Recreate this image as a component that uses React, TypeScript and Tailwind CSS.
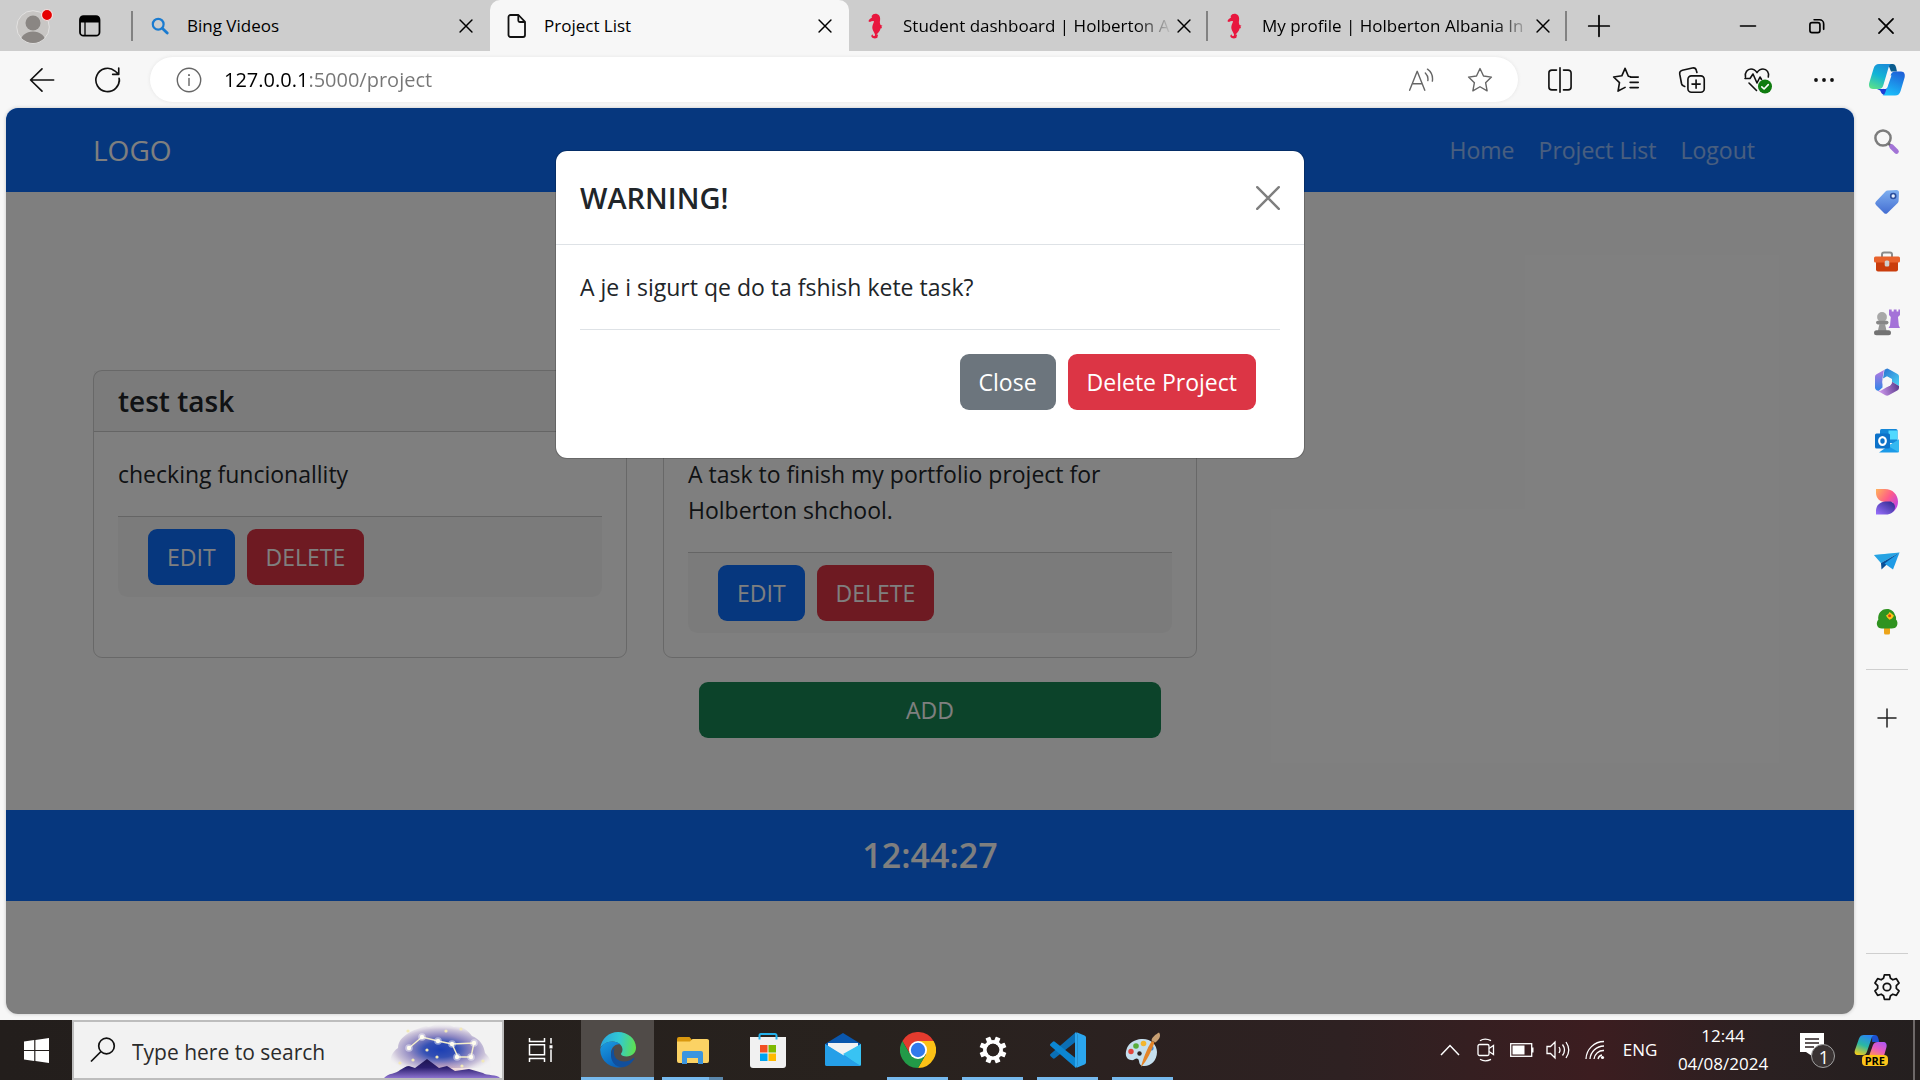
import type { ReactNode } from "react";

const UI = "font-['Open_Sans','Noto_Sans',sans-serif]";

/* ---------- browser chrome icons ---------- */

const Line = ({ size = 24, children, w = 1.5, className = "" }: { size?: number; children: ReactNode; w?: number; className?: string }) => (
  <svg width={size} height={size} viewBox="0 0 24 24" fill="none" stroke="currentColor" strokeWidth={w} strokeLinecap="round" strokeLinejoin="round" className={`block shrink-0 ${className}`} aria-hidden="true">
    {children}
  </svg>
);

const Cross = ({ size = 24, w = 1.6 }: { size?: number; w?: number }) => (
  <Line size={size} w={w}>
    <path d="M5.5 5.5l13 13M18.5 5.5l-13 13" />
  </Line>
);

const Avatar = () => (
  <svg width="40" height="40" viewBox="0 0 40 40" className="block" aria-hidden="true">
    <defs>
      <clipPath id="avatarClip">
        <circle cx="19" cy="21" r="16" />
      </clipPath>
    </defs>
    <circle cx="19" cy="21" r="16.3" fill="#c8c6c4" stroke="#e3e2e1" strokeWidth="1" />
    <g clipPath="url(#avatarClip)" fill="#8a8683">
      <circle cx="19" cy="17" r="7.5" />
      <ellipse cx="19" cy="36" rx="12.5" ry="10.5" />
    </g>
    <circle cx="33" cy="9" r="5.5" fill="#e60000" stroke="#f1e2e2" strokeWidth="1.2" />
  </svg>
);

const Seahorse = () => (
  <svg width="16" height="26" viewBox="0 0 16 26" className="block shrink-0" aria-hidden="true">
    <path d="M5.2 1.2C7 .2 9.8.6 11.2 2.4c1.3 1.8 1 4.2.7 6.2-.2 1.2.2 2.4.7 3.5l1.9.6-1.2 1 .8 1.4-1.6.3c-.3 2-1.7 3.6-3 5.1-1 1.1-1.2 1.8-.5 2.4.8.6.7 1.7-.2 2.2-1.400.8-4.400.5-5.300-1.300-.5-1.200.3-2.300 1.300-2.200-.200 1.100.6 1.800 1.500 1.600.9-.3.9-1.300.5-2.300-.8-1.900-2-3.300-2.400-5.400-.4-2.300.4-4.200 1.300-6.100.3-.7.3-1.300-.1-1.500-1.300-.1-2.500.3-3.700 1.200L.4 8.200C1 6.300 2.600 5.500 4 4.500L3.600 2.900z" fill="#e8173e" />
    <path d="M6 23.500c1.400 1 3 .2 3.200-1.300" stroke="#e8173e" strokeWidth="1.600" fill="none" strokeLinecap="round" />
  </svg>
);

const FilePage = () => (
  <svg width="20" height="26" viewBox="0 0 20 26" fill="none" stroke="#111" strokeWidth="1.800" strokeLinejoin="round" className="block shrink-0" aria-hidden="true">
    <path d="M3.500 2h8l6.500 6.800V22a2 2 0 0 1-2 2H3.500a2 2 0 0 1-2-2V4a2 2 0 0 1 2-2z" />
    <path d="M11.300 2.200v5.300a1.500 1.500 0 0 0 1.500 1.500h5" />
  </svg>
);

const BingSearch = () => (
  <svg width="18" height="18" viewBox="0 0 18 18" fill="none" stroke="#1a7bd0" className="block shrink-0" aria-hidden="true">
    <circle cx="7.200" cy="7.200" r="5.400" strokeWidth="2.200" />
    <path d="M11.500 11.500l4.700 4.500" strokeWidth="2.800" strokeLinecap="round" />
  </svg>
);

const Copilot = ({ size = 38 }: { size?: number }) => (
  <svg width={size} height={size} viewBox="0 0 38 38" className="block shrink-0" aria-hidden="true">
    <defs>
      <linearGradient id="cpA" x1="0.600" y1="0" x2="0.200" y2="1">
        <stop offset="0" stopColor="#1a8fd8" />
        <stop offset="0.450" stopColor="#12b4d6" />
        <stop offset="1" stopColor="#5be08a" />
      </linearGradient>
      <linearGradient id="cpB" x1="0.700" y1="0" x2="0.300" y2="1">
        <stop offset="0" stopColor="#1e62d8" />
        <stop offset="1" stopColor="#1bc0fb" />
      </linearGradient>
    </defs>
    <path d="M20 3h4.500c2.300 0 3 1.500 3.500 3.200l1 4.300h-6z" fill="#0b5c8e" />
    <path d="M11 3h13c-2 0-3 2-3.600 4l-5 17c-.7 2.500-2 4-4.800 4H5c-3.500 0-4.500-3-3.800-6L5.600 7.500C6.500 4.500 8 3 11 3z" fill="url(#cpA)" />
    <path d="M9 28h6l4-1 2 7h-4c-3 0-4-2.500-4.800-4.500z" fill="#1d3fd6" />
    <path d="M27.500 10.500H33c3.500 0 4.300 3 3.600 6l-4 13.500c-1 3-2.500 4.500-5.500 4.500H14c2 0 3-2 3.600-4l5-16c.7-2.500 2-4 4.900-4z" fill="url(#cpB)" />
    <path d="M21.500 14.500h2l-4 11.500c-.5 1.500-1.500 2-3 2h-1z" fill="#f7f7f7" />
  </svg>
);

/* ---------- tabs ---------- */

type Tab = { title: string; icon: ReactNode; active?: boolean; rule?: boolean };

const tabs: Tab[] = [
  { title: "Bing Videos", icon: <BingSearch /> },
  { title: "Project List", icon: <FilePage />, active: true },
  { title: "Student dashboard | Holberton A", icon: <Seahorse />, rule: true },
  { title: "My profile | Holberton Albania In", icon: <Seahorse />, rule: true },
];

const TabStrip = () => (
  <header className="flex h-[51px] items-stretch bg-[#cdcdcd] text-black">
    <div className="flex w-[131px] shrink-0 items-center gap-8 pl-[14px]">
      <button type="button" aria-label="Profile"><Avatar /></button>
      <button type="button" aria-label="Tab actions" className="-ml-4">
        <svg width="40" height="22" viewBox="0 0 40 22" className="block" aria-hidden="true">
          <rect x="10" y="1.200" width="19.500" height="19.500" rx="3.500" fill="none" stroke="#000" strokeWidth="1.800" />
          <path d="M10 7.500V4a3 3 0 0 1 3-3h13.500a3 3 0 0 1 3 3v3.500z" fill="#000" />
          <path d="M15 7v13" stroke="#000" strokeWidth="1.300" />
        </svg>
      </button>
    </div>
    <nav className="flex min-w-0 max-w-[1436px] flex-1" aria-label="Tabs">
      {tabs.map((t, i) => (
        <div
          key={t.title}
          className={`flex min-w-0 flex-1 items-center ${t.active ? "rounded-t-[10px] bg-[#f7f7f7]" : ""}`}
        >
          {i === 0 && <span className="h-[30px] w-0.5 shrink-0 bg-[#828282]" />}
          <span className="flex w-[54px] shrink-0 items-center justify-center">{t.icon}</span>
          <span className={`min-w-0 flex-1 overflow-hidden text-[17px] leading-6 whitespace-nowrap ${t.rule ? "[mask-image:linear-gradient(to_right,#000_calc(100%-36px),transparent)]" : ""}`}>
            {t.title}
          </span>
          <button type="button" aria-label={`Close ${t.title}`} className="flex w-6 shrink-0 justify-center">
            <Cross size={22} />
          </button>
          <span className={`ml-[10px] h-[30px] w-0.5 shrink-0 ${t.rule ? "bg-[#828282]" : ""}`} />
        </div>
      ))}
    </nav>
    <button type="button" aria-label="New tab" className="flex w-16 items-center justify-center">
      <Line size={26} w={1.600}><path d="M12 2.500v19M2.500 12h19" /></Line>
    </button>
    <div className="ml-auto flex">
      <button type="button" aria-label="Minimize" className="flex w-[69px] items-center justify-center">
        <Line size={20} w={2}><path d="M3 12h18" /></Line>
      </button>
      <button type="button" aria-label="Restore" className="flex w-[69px] items-center justify-center">
        <Line size={20} w={2}>
          <rect x="3.500" y="8" width="12" height="12" rx="2.500" />
          <path d="M8.500 4.500h6.500a5 5 0 0 1 5 5V16" />
        </Line>
      </button>
      <button type="button" aria-label="Close window" className="flex w-[69px] items-center justify-center">
        <Cross size={26} w={1.600} />
      </button>
    </div>
  </header>
);

/* ---------- toolbar ---------- */

const STAR = "M12 2.200l3 6.400 6.800.9-5 4.800 1.300 7-6.100-3.500-6.100 3.500 1.300-7-5-4.800 6.800-.9z";

const Toolbar = () => (
  <div className="flex h-[57px] items-center bg-[#f7f7f7] text-[#111]">
    <div className="flex w-[150px] shrink-0 items-center pl-[9px]">
      <button type="button" aria-label="Back" className="flex w-[66px] justify-center">
        <Line size={28} w={1.400}><path d="M22 12H2.200M12 2.500L2.200 12l9.800 9.500" /></Line>
      </button>
      <button type="button" aria-label="Refresh" className="flex w-[66px] justify-center">
        <Line size={28} w={1.400}><path d="M21.500 10.500A10 10 0 1 1 18 4.300l3 2.700M21.200 1.800V7.200H16M21.500 10.500q.4 1.500.2 3" /></Line>
      </button>
    </div>
    <div className="flex h-[45px] min-w-0 flex-1 items-center rounded-full bg-white pr-6 pl-[26px] text-[#666] shadow-[0_0_3px_1px_#ececec]">
      <Line size={26} w={1.300}><circle cx="12" cy="12" r="10.800" /><path d="M12 10.500v6.500" /><path d="M12 7.300v.2" strokeWidth="1.800" /></Line>
      <input
        type="text"
        aria-label="Address"
        defaultValue="127.0.0.1:5000/project"
        className="ml-[22px] block min-w-0 flex-1 bg-[linear-gradient(to_right,#000_84px,#767676_84px)] bg-clip-text text-[20px] leading-7 text-transparent outline-none"
      />
      <button type="button" aria-label="Read aloud" className="mr-8">
        <Line size={26} w={1.300}><path d="M1.500 21.500L8.500 4l7 17.500M4 15.500h9M16 5.500q3 3 2.300 7M18 2q5.500 4 4.500 11" /></Line>
      </button>
      <button type="button" aria-label="Add to favorites">
        <Line size={28} w={1.200}><path d={STAR} /></Line>
      </button>
    </div>
    <div className="flex w-[402px] shrink-0 items-center pl-[9px]">
      <button type="button" aria-label="Split screen" className="flex w-[66px] justify-center">
        <Line size={28} w={1.400}><path d="M9 3.500H5a2.500 2.500 0 0 0-2.500 2.500v12A2.500 2.500 0 0 0 5 20.500h4M15 3.500h4A2.500 2.500 0 0 1 21.500 6v12a2.500 2.500 0 0 1-2.500 2.500h-4M12 1.500v21" /></Line>
      </button>
      <button type="button" aria-label="Favorites" className="flex w-[66px] justify-center">
        <Line size={28} w={1.400}><path d="M16 9.200L14 8.800 11.200 2 8.400 8.400l-7 1 5 4.900-1.200 7.200 6-3.200M15.500 9.500h7M15.500 14h7M15.500 18.500h7" /></Line>
      </button>
      <button type="button" aria-label="Collections" className="flex w-[66px] justify-center">
        <Line size={28} w={1.400}><rect x="8.500" y="8.500" width="14" height="14" rx="3" /><path d="M15.500 12v7M12 15.500h7M5.800 17.500L4.500 17a3 3 0 0 1-1.500-2L1.500 7a3 3 0 0 1 2.300-3.400l8.500-1.900A3 3 0 0 1 15.800 4l.4 1.500" /></Line>
      </button>
      <button type="button" aria-label="Browser essentials" className="flex w-[66px] justify-center">
        <svg width="30" height="30" viewBox="0 0 30 30" fill="none" stroke="#111" strokeWidth="1.600" strokeLinecap="round" strokeLinejoin="round" className="block" aria-hidden="true">
          <path d="M2.500 12C1.500 7.500 4.500 4 8 4c3 0 4.800 1.800 6 3.600C15.200 5.800 17 4 20 4c3.800 0 6.500 3.800 5.300 8M2 13.500h5l3-4.500 4 9 3-6 1.500 2.500M6 18l7.500 7.500" />
          <circle cx="22" cy="21.500" r="7" fill="#107c10" stroke="none" />
          <path d="M18.800 21.800l2.300 2.200 4.200-4.400" stroke="#fff" />
        </svg>
      </button>
      <button type="button" aria-label="Settings and more" className="flex w-[66px] justify-center">
        <svg width="24" height="6" viewBox="0 0 24 6" className="block" fill="#111" aria-hidden="true"><circle cx="4" cy="3" r="1.900" /><circle cx="12" cy="3" r="1.900" /><circle cx="20" cy="3" r="1.900" /></svg>
      </button>
      <button type="button" aria-label="Copilot" className="ml-[2px] flex w-[56px] justify-center"><Copilot size={38} /></button>
    </div>
  </div>
);

/* ---------- edge sidebar ---------- */

const Art = ({ children }: { children: ReactNode }) => (
  <svg width="28" height="28" viewBox="0 0 28 28" className="block" aria-hidden="true">{children}</svg>
);

const sideItems: { name: string; icon: ReactNode }[] = [
  {
    name: "Search",
    icon: (
      <Art>
        <circle cx="10" cy="10" r="7.600" fill="none" stroke="#7c7c7c" strokeWidth="2.500" />
        <path d="M15.500 15.500l2.500 2.500" stroke="#6b6b6b" strokeWidth="2.500" />
        <path d="M18.500 18.500l5 5" stroke="#a274d6" strokeWidth="4.600" strokeLinecap="round" />
      </Art>
    ),
  },
  {
    name: "Shopping",
    icon: (
      <Art>
        <defs><linearGradient id="tagG" x1="0.500" y1="0" x2="0.500" y2="1"><stop offset="0" stopColor="#7fb0f0" /><stop offset="1" stopColor="#446ed2" /></linearGradient></defs>
        <path d="M14.500 2.500L23.500 2a2.500 2.500 0 0 1 2.500 2.500l-.4 8.500a3 3 0 0 1-.9 2L14.500 25a2.500 2.500 0 0 1-3.500 0l-8-8a2.500 2.500 0 0 1 0-3.500L12.500 3.400a3 3 0 0 1 2-.9z" fill="url(#tagG)" />
        <circle cx="20.200" cy="8" r="2.500" fill="#e8f1ff" stroke="#2c4f9e" strokeWidth="1.600" />
      </Art>
    ),
  },
  {
    name: "Tools",
    icon: (
      <Art>
        <path d="M9 9V6.500a2 2 0 0 1 2-2h6a2 2 0 0 1 2 2V9" fill="none" stroke="#8b8b8b" strokeWidth="2" />
        <path d="M3 12h22v9.500a2 2 0 0 1-2 2H5a2 2 0 0 1-2-2z" fill="#ca3d0c" />
        <rect x="1" y="8.500" width="26" height="6" rx="1.500" fill="#e8622c" />
        <rect x="11.700" y="12.500" width="4.600" height="6" rx="1.500" fill="#cfcfcf" />
      </Art>
    ),
  },
  {
    name: "Games",
    icon: (
      <Art>
        <path d="M16 1.500h2.700v2h2v-2h2.900v2h1.800v-2H27v5.500l-2 2 .8 8.500L27 20H15.500l1.500-2.500.8-8.500-1.800-2z" fill="#a472d8" />
        <circle cx="9" cy="9" r="4.900" fill="#a8a8a8" />
        <rect x="3" y="12.800" width="12.500" height="3.600" rx="1.800" fill="#868686" />
        <path d="M6.500 16h5.500l1.600 7H4.800z" fill="#979797" />
        <rect x="1" y="22.200" width="17" height="5" rx="2.500" fill="#737373" />
      </Art>
    ),
  },
  {
    name: "Microsoft 365",
    icon: (
      <Art>
        <defs>
          <linearGradient id="mA" x1="0" y1="0" x2="1" y2="1"><stop offset="0" stopColor="#2a6fd0" /><stop offset="1" stopColor="#4bd5f5" /></linearGradient>
          <linearGradient id="mB" x1="0" y1="0" x2="0" y2="1"><stop offset="0" stopColor="#b878e0" /><stop offset="1" stopColor="#2d86e8" /></linearGradient>
          <linearGradient id="mC" x1="0" y1="0.500" x2="1" y2="0.300"><stop offset="0" stopColor="#d29bf0" /><stop offset="1" stopColor="#5b3a8c" /></linearGradient>
        </defs>
        <path d="M11.500 1.800l2-1q1-.4 2 .1l9 5.100q1.500.9 1.500 2.500V18l-7-4.200V11l-5-2.800-4 2.300z" fill="url(#mA)" />
        <path d="M11 2L3.500 6.200Q2 7 2 8.800v11q0 1.500 1.500 2.400L5.500 23l4-3.500v-9z" fill="url(#mB)" />
        <path d="M19 13.800l7 4.200v2q0 1.500-1.300 2.200l-9 5.100q-1.700.9-3.300 0L4.500 22.700q2.500.5 4.500-.8l8.500-4.900q1.500-1 1.500-3.200z" fill="url(#mC)" />
        <circle cx="14" cy="14" r="4.600" fill="#f7f7f7" />
      </Art>
    ),
  },
  {
    name: "Outlook",
    icon: (
      <Art>
        <path d="M7 2.500A1.500 1.500 0 0 1 8.500 1H23a1.500 1.500 0 0 1 1.500 1.500V15H7z" fill="#1587d8" />
        <path d="M15.500 2.500H24.500v9h-9z" fill="#50d9ff" />
        <path d="M7 11.500h10v7H7z" fill="#0a5ea8" />
        <path d="M26 11.500V23a1.500 1.500 0 0 1-1.500 1.500H6L15 18z" fill="#1c9ae8" />
        <path d="M26 11.500v12.800L15 18z" fill="#35b8f1" />
        <rect x="2" y="5.500" width="15" height="15" rx="1.500" fill="#0d72c9" />
        <ellipse cx="9.500" cy="13" rx="3.300" ry="3.900" fill="none" stroke="#fff" strokeWidth="2.200" />
      </Art>
    ),
  },
  {
    name: "Designer",
    icon: (
      <Art>
        <defs>
          <linearGradient id="dA" x1="0" y1="0" x2="1" y2="0.800"><stop offset="0" stopColor="#ffb45a" /><stop offset="0.500" stopColor="#ff5c87" /><stop offset="1" stopColor="#b53df5" /></linearGradient>
          <linearGradient id="dB" x1="0" y1="1" x2="1" y2="0"><stop offset="0" stopColor="#9a70ff" /><stop offset="1" stopColor="#2b2789" /></linearGradient>
        </defs>
        <path d="M3 1h9c7.500 0 13 5.500 13 12.700 0 6.300-4.500 12.300-13 12.300l8-12H12c-5 0-9-4-9-9z" fill="url(#dA)" />
        <path d="M3 26.500V23c0-5.500 4-9.500 9.500-9.500h4c3 0 5.500 2.500 5.500 5.500 0 4.500-4 7.500-9 7.500z" fill="url(#dB)" />
      </Art>
    ),
  },
  {
    name: "Drop",
    icon: (
      <Art>
        <path d="M1 7l25.500-2.500L8 15z" fill="#35c1f1" />
        <path d="M8 15l18.500-10.500L8.500 21.500z" fill="#0a4f96" />
        <path d="M11.500 15.500L26.500 4.500 20 21.500z" fill="#1f9be6" />
        <path d="M1 7l7 8L26 4.700z" fill="#1a86d6" opacity="0.500" />
      </Art>
    ),
  },
  {
    name: "Tree",
    icon: (
      <Art>
        <rect x="11" y="19" width="6" height="7.500" rx="1.500" fill="#eca41a" />
        <path d="M14 1c4 0 7 2.500 8 6 1 1 1.300 3 1 4.500 1.500 1.500 2 4.500.8 6.500-1 1.800-3 2.500-5 2.500H9c-2.500 0-4.500-1-5-3.500-.5-2 .2-4 1.300-5.200C4.500 6 8 1 14 1z" fill="#2f9320" />
        <path d="M16.500 4l2 1.500 2.500 2.300-2 2.700-2.500 1.300-2.300-2.300L13 7.500l2.300-1.500z" fill="#ffc21a" />
        <circle cx="16.600" cy="7.800" r="1.500" fill="#d6480f" />
      </Art>
    ),
  },
];

const GEAR = "M9.800 1.500h4.400l.8 3.100 2 1.200 3-1 2.300 3.800-2.300 2.200v2.400l2.300 2.200-2.300 3.800-3-1-2 1.200-.8 3.100H9.800L9 19.400l-2-1.200-3 1-2.300-3.800L4 13.200v-2.400L1.700 8.600 4 4.800l3 1 2-1.200z";

const Sidebar = () => (
  <aside className="flex w-[66px] shrink-0 flex-col items-center pb-[13px]" aria-label="Sidebar">
    <div className="flex flex-col gap-8 pt-5">
      {sideItems.map((s) => (
        <button type="button" key={s.name} aria-label={s.name} title={s.name}>{s.icon}</button>
      ))}
    </div>
    <hr className="mt-[33px] w-[42px] border-[#cfcfcf]" />
    <button type="button" aria-label="Customize" className="mt-9 text-[#222]"><Line size={24} w={1.500}><path d="M12 3v18M3 12h18" /></Line></button>
    <hr className="mt-auto w-[42px] border-[#cfcfcf]" />
    <button type="button" aria-label="Sidebar settings" className="mt-[19px] text-[#111]"><Line size={28} w={1.500}><path d={GEAR} /><circle cx="12" cy="12" r="3.200" /></Line></button>
  </aside>
);

/* ---------- web page ---------- */

const BTN = "rounded-[9px] px-[18px] py-[9px] text-[23px] leading-9 text-white border border-transparent";

const ProjectCard = ({ title, text }: { title: string; text: string }) => (
  <article className="mx-[18px] flex flex-col rounded-[9px] border border-black/[0.18]">
    <h2 className="border-b border-black/[0.18] bg-black/[0.03] px-6 py-3 text-[28px] leading-9 font-semibold">{title}</h2>
    <div className="p-6">
      <p className="mb-6">{text}</p>
      <div className="flex gap-3 rounded-b-[9px] border-t border-black/[0.18] bg-black/[0.03] px-[30px] py-3">
        <button type="button" className={`${BTN} bg-[#0d6efd]`}>EDIT</button>
        <button type="button" className={`${BTN} bg-[#dc3545]`}>DELETE</button>
      </div>
    </div>
  </article>
);

const DeleteDialog = () => (
  <div className="absolute inset-0 flex items-start justify-center bg-black/50 pt-[42px]">
    <section role="dialog" aria-modal="true" aria-labelledby="dlg-title" className="w-full max-w-[750px] rounded-xl border border-black/[0.18] bg-white bg-clip-padding pb-6">
      <header className="flex items-center justify-between border-b border-[#dee2e6] p-6">
        <h2 id="dlg-title" className="text-[29px] leading-[45px] font-semibold">WARNING!</h2>
        <button type="button" aria-label="Close dialog" className="text-[#7f7f7f]">
          <Line size={24} w={2.400}><path d="M1.200 1.200l21.600 21.600M22.800 1.200L1.200 22.800" /></Line>
        </button>
      </header>
      <div className="px-6 pt-6">
        <p className="leading-9">A je i sigurt qe do ta fshish kete task?</p>
        <div className="mt-6 flex justify-end gap-3 border-t border-[#dee2e6] p-6">
          <button type="button" className={`${BTN} bg-[#6c757d]`}>Close</button>
          <button type="button" className={`${BTN} bg-[#dc3545]`}>Delete Project</button>
        </div>
      </div>
    </section>
  </div>
);

const WebPage = () => (
  <main className="relative min-w-0 flex-1 overflow-hidden rounded-xl bg-white text-[23px] leading-9 text-[#212529] shadow-[0_0_3px_1px_#d8d8d8]">
    <nav className="bg-[#0d6efd]">
      <div className="mx-auto flex max-w-[1710px] items-center justify-between px-[18px] py-5">
        <a href="#home" className="text-[28px] leading-[44px] text-white">LOGO</a>
        <ul className="flex gap-6 px-3 text-white/55">
          <li><a href="#home">Home</a></li>
          <li><a href="#projects">Project List</a></li>
          <li><a href="#logout">Logout</a></li>
        </ul>
      </div>
    </nav>
    <div className="mx-auto grid max-w-[1710px] grid-cols-3 gap-y-6 pt-[178px] pb-[72px]">
      <ProjectCard title="test task" text="checking funcionallity" />
      <ProjectCard title="Portfolio" text="A task to finish my portfolio project for Holberton shchool." />
      <button type="button" className={`${BTN} col-start-2 mx-[54px] bg-[#198754]`}>ADD</button>
    </div>
    <footer className="bg-[#0d6efd] py-6 text-center">
      <p className="text-[34px] leading-[43px] font-semibold text-white">12:44:27</p>
    </footer>
    <DeleteDialog />
  </main>
);

/* ---------- windows taskbar ---------- */

const SearchArt = () => (
  <svg width="118" height="56" viewBox="0 0 118 56" className="block self-end" aria-hidden="true">
    <defs>
      <radialGradient id="sky" cx="0.500" cy="0.600" r="0.560">
        <stop offset="0" stopColor="#1c3fb4" />
        <stop offset="0.300" stopColor="#3450b4" />
        <stop offset="0.550" stopColor="#8f88c2" />
        <stop offset="0.800" stopColor="#cdc5da" />
        <stop offset="1" stopColor="#f0edf2" stopOpacity="0.200" />
      </radialGradient>
      <radialGradient id="dawn" cx="0.500" cy="1" r="0.600">
        <stop offset="0" stopColor="#e88f90" />
        <stop offset="1" stopColor="#e88f90" stopOpacity="0" />
      </radialGradient>
      <linearGradient id="hill" x1="0" y1="0" x2="0" y2="1">
        <stop offset="0" stopColor="#1d1450" />
        <stop offset="0.450" stopColor="#2b1f6e" />
        <stop offset="1" stopColor="#8d73cf" />
      </linearGradient>
    </defs>
    <path d="M7 46C5 36 8 30 14 26c0-8 6-12 12-16 6-3 10-4 16-6 4 2 8-1 12-4 8 0 12 3 16 5 8-2 14 4 18 9 8 3 12 10 13 17 6 5 6 10 6 15z" fill="url(#sky)" />
    <ellipse cx="60" cy="44" rx="38" ry="22" fill="url(#dawn)" />
    <path d="M25 26L38 15l16 4 14 3 22-1-3 14-13 0-6-13" fill="none" stroke="#f5efc9" strokeWidth="1.400" />
    {[[25, 26], [38, 15], [54, 19], [68, 22], [90, 21], [87, 35], [73, 35]].map(([x, y]) => (
      <g key={`${x}-${y}`}>
        <circle cx={x} cy={y} r="3.800" fill="#fff" opacity="0.450" />
        <circle cx={x} cy={y} r="2.200" fill="#fffdf0" />
      </g>
    ))}
    {[[24, 9], [16, 41], [29, 38], [62, 9], [77, 7], [43, 28], [53, 35], [99, 39], [78, 44]].map(([x, y]) => (
      <circle key={`${x}-${y}`} cx={x} cy={y} r="1.600" fill="#f2e9b8" />
    ))}
    <path d="M0 56c4-5 12-4 16-8 4-2 6-4 9-4l6 2 12-9 12 9 8-2 8 5 14-2 14 4c4 3 14 1 17 5z" fill="url(#hill)" />
  </svg>
);

const WindowsLogo = () => (
  <svg width="25" height="25" viewBox="0 0 25 25" fill="#fff" className="block" aria-hidden="true">
    <path d="M0 3.500l10.200-1.400v9.800H0zM11.400 1.900L25 0v11.900H11.400zM0 13h10.200v9.900L0 21.500zM11.400 13H25v12l-13.600-1.900z" />
  </svg>
);

const App36 = ({ children }: { children: ReactNode }) => (
  <svg width="36" height="36" viewBox="0 0 36 36" className="block" aria-hidden="true">{children}</svg>
);

const taskApps: { name: string; state: "active" | "open" | "multi" | "idle"; icon: ReactNode }[] = [
  {
    name: "Microsoft Edge",
    state: "active",
    icon: (
      <App36>
        <defs>
          <linearGradient id="eA" x1="0" y1="0.500" x2="1" y2="0.600"><stop offset="0" stopColor="#2aa5dd" /><stop offset="0.500" stopColor="#31c9d4" /><stop offset="1" stopColor="#60e24b" /></linearGradient>
          <linearGradient id="eB" x1="0" y1="0" x2="0.500" y2="1"><stop offset="0" stopColor="#1b9de2" /><stop offset="1" stopColor="#0a63bb" /></linearGradient>
        </defs>
        <path d="M18 0c10 0 18 7 18 15.500 0 5.500-4 9-9.500 9-3 0-5.500-1-5.500-2.500 0-1 1.500-1.500 1.500-4.500 0-4-4-8-10-8C6.500 9.500 2 13 .3 16 1.500 6.500 9 0 18 0z" fill="url(#eA)" />
        <path d="M.2 17C2 12 7 9.500 12.500 9.500c3 0 6 1 8 3-6-1-9.500 4-9.500 9 0 7 5.500 12.500 13 13A18 18 0 0 1 .2 17z" fill="url(#eB)" />
        <path d="M14 18.500c-1 7 4 11 10 11 4 0 7-1.500 9.500-3.500.7-.4 1 .2.700.8C32 31 28 34.500 23 35.300 15 35.500 10.500 29 11 22c.3-3 1.500-5 3.500-6z" fill="#114f9c" />
      </App36>
    ),
  },
  {
    name: "File Explorer",
    state: "multi",
    icon: (
      <App36>
        <path d="M2 7a2 2 0 0 1 2-2h10.500l2.500 3H34v5H2z" fill="#d9980f" />
        <path d="M2 9.500h13L17.500 7H32a2 2 0 0 1 2 2v20a2 2 0 0 1-2 2H4a2 2 0 0 1-2-2z" fill="#fbd264" />
        <path d="M7 21a2 2 0 0 1 2-2h17a2 2 0 0 1 2 2v11h-5v-6H12v6H7z" fill="#3b95df" />
      </App36>
    ),
  },
  {
    name: "Microsoft Store",
    state: "idle",
    icon: (
      <App36>
        <path d="M0 5h36v28a3 3 0 0 1-3 3H3a3 3 0 0 1-3-3z" fill="#f1f1f1" />
        <path d="M9.500 7.500V3.500a1.500 1.500 0 0 1 1.500-1.500h14a1.500 1.500 0 0 1 1.500 1.500v4" fill="none" stroke="#24b2ec" strokeWidth="2" />
        <path d="M10 13h7.500v7.500H10z" fill="#f25022" /><path d="M18.500 13H26v7.500h-7.500z" fill="#7fba00" />
        <path d="M10 21.500h7.500V29H10z" fill="#00a4ef" /><path d="M18.500 21.500H26V29h-7.500z" fill="#ffb900" />
      </App36>
    ),
  },
  {
    name: "Mail",
    state: "idle",
    icon: (
      <App36>
        <path d="M0 12L18 1l18 11v5H0z" fill="#0a57ad" />
        <path d="M3 11h30v10L18 29 3 21z" fill="#f2f2f2" />
        <path d="M0 12l18 12L36 12v20a2 2 0 0 1-2 2H2a2 2 0 0 1-2-2z" fill="#1e95e3" />
        <path d="M18 22l18-10v20c0 1-.5 1.500-1.500 2z" fill="#38c3f3" />
        <path d="M0 12l36 22H2a2 2 0 0 1-2-2z" fill="#259fe8" />
      </App36>
    ),
  },
  {
    name: "Google Chrome",
    state: "open",
    icon: (
      <App36>
        <path d="M18 9h15.600A18 18 0 0 1 18 36l7.800-13.500z" fill="#fbc116" />
        <path d="M18 9h15.600A18 18 0 0 0 2.400 9l7.800 13.500z" fill="#e33b2e" />
        <path d="M2.400 9A18 18 0 0 0 18 36l7.800-13.500H10.200z" fill="#229a48" />
        <circle cx="18" cy="18" r="9" fill="#fff" /><circle cx="18" cy="18" r="7.200" fill="#3079ec" />
      </App36>
    ),
  },
  {
    name: "Settings",
    state: "open",
    icon: (
      <App36>
        <g fill="#fff">
          {[22.5, 67.5, 112.5, 157.5, 202.5, 247.5, 292.5, 337.5].map((a) => (
            <rect key={a} x="15.500" y="4.500" width="5" height="7" rx="0.500" transform={`rotate(${a} 18 18)`} />
          ))}
        </g>
        <circle cx="18" cy="18" r="8.200" fill="none" stroke="#fff" strokeWidth="3.600" />
      </App36>
    ),
  },
  {
    name: "Visual Studio Code",
    state: "open",
    icon: (
      <App36>
        <path d="M26 0v9.500L4.800 26.200a1.500 1.500 0 0 1-2 0L.6 24.200a1.500 1.500 0 0 1 0-2.200z" fill="#0b6fb5" />
        <path d="M26 36v-9.500L4.800 9.800a1.500 1.500 0 0 0-2 0L.6 11.800a1.500 1.500 0 0 0 0 2.200z" fill="#0c86d1" />
        <path d="M26 0l8.500 3.500A2.500 2.500 0 0 1 36 6v24a2.500 2.500 0 0 1-1.500 2.500L26 36c1-1 1.200-2 1.200-3V3c0-1-.2-2-1.200-3z" fill="#2ba6ee" />
        <path d="M25 .5l2.200 1v33L25 35.500z" fill="#2ba6ee" />
      </App36>
    ),
  },
  {
    name: "Paint",
    state: "open",
    icon: (
      <App36>
        <path d="M16 7c9-1 16 5 16 13 0 9-7 15-14 14-5-1-3-5-5-7s-4 2-7 1C0 27 0 21 2 16c2-5 8-8.500 14-9z" fill="#c5dfee" />
        <circle cx="14.500" cy="21.500" r="2.200" fill="#2e2422" />
        <circle cx="6" cy="19.500" r="2.700" fill="#e2453b" /><circle cx="11" cy="14" r="2.800" fill="#58ae3c" /><circle cx="18.500" cy="11.500" r="2.800" fill="#f4b62e" /><circle cx="26" cy="16" r="2.600" fill="#3d86d9" />
        <path d="M16 35c2-8 6-19 11-26l2.500 1C27 18 22 29 16 35z" fill="#e38428" />
        <path d="M26.500 8.500c0-3 4-6 7.500-8 1.500 2 2 5.500-3.500 10z" fill="#c9a073" />
      </App36>
    ),
  },
];

const Taskbar = () => (
  <footer className="flex h-[60px] items-stretch bg-[linear-gradient(to_right,#231e1c_0%,#28221e_45%,#2e2122_70%,#3c1d20_83%,#2a2021_92%,#241f1f_100%)] text-white">
    <button type="button" aria-label="Start" className="flex w-[72px] shrink-0 items-center justify-center"><WindowsLogo /></button>
    <div className="flex w-[432px] shrink-0 items-center overflow-hidden border-2 border-[#bdbdbd] bg-[#f2f2f2] text-[#1c1c1c]">
      <svg width="26" height="26" viewBox="0 0 26 26" fill="none" stroke="#111" strokeWidth="1.700" className="ml-4 block shrink-0" aria-hidden="true"><circle cx="16.500" cy="9" r="7.800" /><path d="M11 14.500L1 24.500" /></svg>
      <input type="text" aria-label="Type here to search" placeholder="Type here to search" className="ml-4 min-w-0 flex-1 bg-transparent pt-[3px] text-[21px] leading-7 outline-none placeholder:text-[#2b2b2b] placeholder:opacity-100" />
      <SearchArt />
    </div>
    <button type="button" aria-label="Task View" className="flex w-[77px] shrink-0 items-center justify-center">
      <svg width="26" height="24" viewBox="0 0 26 24" fill="none" stroke="#fff" strokeWidth="1.500" className="mr-1 block" aria-hidden="true">
        <path d="M1.500 0v3.500h15V0M1.500 24v-3.500h15V24M1.500 6.800h15v10h-15zM23 0v5.500M23 11.500V24" /><path d="M23 7.200v3.200" strokeWidth="3" />
      </svg>
    </button>
    <div className="flex gap-[2px]">
      {taskApps.map((a) => (
        <button type="button" key={a.name} aria-label={a.name} className={`flex w-[73px] flex-col items-center pt-3 ${a.state === "active" ? "bg-[#504b48]" : ""}`}>
          {a.icon}
          <span className={`mt-[9px] flex h-[3px] ${a.state === "active" ? "w-full" : "w-[61px]"} ${a.state === "idle" ? "" : "bg-[#76b9ed]"}`}>
            {a.state === "multi" && <span className="ml-auto w-[14px] bg-[#5b87ab]" />}
          </span>
        </button>
      ))}
    </div>
    <div className="ml-auto flex items-center text-[17px]">
      <button type="button" aria-label="Show hidden icons" className="flex w-[37px] justify-center">
        <svg width="20" height="12" viewBox="0 0 20 12" fill="none" stroke="#fff" strokeWidth="1.500" className="block" aria-hidden="true"><path d="M1 11l9-9.500L19 11" /></svg>
      </button>
      <button type="button" aria-label="Meet now" className="flex w-9 justify-center">
        <svg width="18" height="24" viewBox="0 0 18 24" fill="none" stroke="#fff" strokeWidth="1.300" className="block" aria-hidden="true">
          <rect x="1" y="6.500" width="11" height="11" rx="1.500" /><path d="M12 10.500l4.500-3v9l-4.500-3M3 2.700q5-3 11 0M3 21.300q5 3 11 0" />
        </svg>
      </button>
      <button type="button" aria-label="Battery" className="flex w-9 justify-center">
        <svg width="24" height="14" viewBox="0 0 24 14" className="block" aria-hidden="true"><rect x="0.700" y="0.700" width="21" height="12.600" fill="none" stroke="#fff" strokeWidth="1.300" /><path d="M2.500 2.500h12v9h-12zM22 4.500h1.500v5H22z" fill="#fff" /></svg>
      </button>
      <button type="button" aria-label="Volume" className="flex w-9 justify-center">
        <svg width="24" height="20" viewBox="0 0 24 20" fill="none" stroke="#fff" strokeWidth="1.300" className="block" aria-hidden="true"><path d="M1 6.500h3.500L9 2v16l-4.500-4.500H1zM13 7q2 3 0 6M16.500 4.500q4 5.500 0 11M20 2q5.500 8 0 16" /></svg>
      </button>
      <button type="button" aria-label="Network" className="flex w-[38px] justify-center">
        <svg width="20" height="20" viewBox="0 0 20 20" fill="none" stroke="#fff" strokeWidth="1.300" className="block" aria-hidden="true"><path d="M1 19A18 18 0 0 1 19 1.500M5 19A14 14 0 0 1 19 6M9 19a9.500 9.500 0 0 1 10-8.500M13 19a5.500 5.500 0 0 1 4-4" /><circle cx="17.500" cy="17.500" r="1.600" fill="#fff" stroke="none" /></svg>
      </button>
      <button type="button" className="w-[52px] text-center">ENG</button>
      <button type="button" className="w-[114px] text-center leading-7"><time className="block">12:44</time><time className="block">04/08/2024</time></button>
      <button type="button" aria-label="Notifications, 1 new" className="relative flex w-[62px] justify-center">
        <svg width="38" height="38" viewBox="0 0 38 38" className="ml-[13px] block" aria-hidden="true">
          <path d="M1 2h24v19H13v4l-6-4H1z" fill="#fff" /><path d="M6 8h14M6 12h14M6 16h9" stroke="#2b2021" strokeWidth="1.400" />
          <circle cx="24" cy="25" r="11.500" fill="#3a3333" stroke="#a0a0a0" strokeWidth="1" />
        </svg>
        <span className="absolute top-[14px] left-[32px] w-6 text-center text-[18px] leading-6">1</span>
      </button>
      <button type="button" aria-label="Copilot preview" className="relative flex w-[58px] justify-center">
        <svg width="34" height="32" viewBox="0 0 34 32" className="block" aria-hidden="true">
          <defs>
            <linearGradient id="pA" x1="0.600" y1="0" x2="0.200" y2="1"><stop offset="0" stopColor="#2a86f0" /><stop offset="0.500" stopColor="#29b8a4" /><stop offset="1" stopColor="#f2cc1a" /></linearGradient>
            <linearGradient id="pB" x1="0.800" y1="0" x2="0.200" y2="1"><stop offset="0" stopColor="#b057f2" /><stop offset="0.500" stopColor="#e65ac0" /><stop offset="1" stopColor="#ff8f5a" /></linearGradient>
          </defs>
          <path d="M18 1h3c2 0 3 2 3.500 4l.7 3h-7z" fill="#1b50d0" />
          <path d="M10 1h11c-2 0-3 1.500-3.500 3.500L13 17.500c-.8 2.500-2 3.500-4 3.500H4c-3 0-4-2-3-5L5 4.500C6 2 7.500 1 10 1z" fill="url(#pA)" />
          <path d="M24 8h5c3 0 4 2 3.500 5L30 22H15l4-11c.8-2 2.500-3 5-3z" fill="url(#pB)" />
        </svg>
        <span className="absolute right-3 bottom-0 rounded-sm bg-[#fcc419] px-[3px] text-[11px] leading-[11px] font-bold text-black">PRE</span>
      </button>
      <span className="ml-[13px] h-full w-0.5 bg-[#6d6868]" />
      <span className="w-[5px]" />
    </div>
  </footer>
);

export default function App() {
  return (
    <div className={`flex min-h-screen flex-col bg-[#f7f7f7] ${UI}`}>
      <TabStrip />
      <Toolbar />
      <div className="flex flex-1 pb-1.5 pl-1.5">
        <WebPage />
        <Sidebar />
      </div>
      <Taskbar />
    </div>
  );
}
